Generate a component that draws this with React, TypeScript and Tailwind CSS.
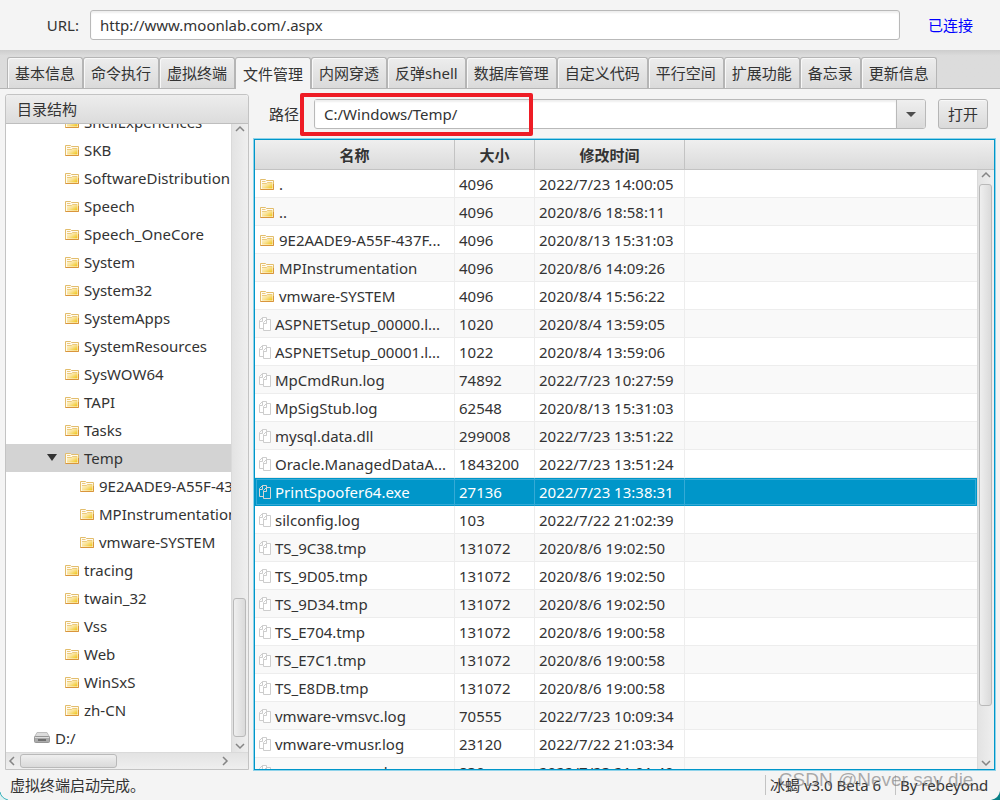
import { ReactNode } from "react";
import clsx from "clsx";

interface treeType {
    name: string;
    level: number;
    open?: boolean;
}

interface fileType {
    name: string;
    size: string;
    time: string;
    dir?: boolean;
}

const tabs = ["基本信息", "命令执行", "虚拟终端", "文件管理", "内网穿透", "反弹shell", "数据库管理", "自定义代码", "平行空间", "扩展功能", "备忘录", "更新信息"];

const tree: treeType[] = [
    { name: "ShellExperiences", level: 1 },
    { name: "SKB", level: 1 },
    { name: "SoftwareDistribution", level: 1 },
    { name: "Speech", level: 1 },
    { name: "Speech_OneCore", level: 1 },
    { name: "System", level: 1 },
    { name: "System32", level: 1 },
    { name: "SystemApps", level: 1 },
    { name: "SystemResources", level: 1 },
    { name: "SysWOW64", level: 1 },
    { name: "TAPI", level: 1 },
    { name: "Tasks", level: 1 },
    { name: "Temp", level: 1, open: true },
    { name: "9E2AADE9-A55F-437F", level: 2 },
    { name: "MPInstrumentation", level: 2 },
    { name: "vmware-SYSTEM", level: 2 },
    { name: "tracing", level: 1 },
    { name: "twain_32", level: 1 },
    { name: "Vss", level: 1 },
    { name: "Web", level: 1 },
    { name: "WinSxS", level: 1 },
    { name: "zh-CN", level: 1 },
    { name: "D:/", level: 0 },
];

const files: fileType[] = [
    { name: ".", size: "4096", time: "2022/7/23 14:00:05", dir: true },
    { name: "..", size: "4096", time: "2020/8/6 18:58:11", dir: true },
    { name: "9E2AADE9-A55F-437F...", size: "4096", time: "2020/8/13 15:31:03", dir: true },
    { name: "MPInstrumentation", size: "4096", time: "2020/8/6 14:09:26", dir: true },
    { name: "vmware-SYSTEM", size: "4096", time: "2020/8/4 15:56:22", dir: true },
    { name: "ASPNETSetup_00000.l...", size: "1020", time: "2020/8/4 13:59:05" },
    { name: "ASPNETSetup_00001.l...", size: "1022", time: "2020/8/4 13:59:06" },
    { name: "MpCmdRun.log", size: "74892", time: "2022/7/23 10:27:59" },
    { name: "MpSigStub.log", size: "62548", time: "2020/8/13 15:31:03" },
    { name: "mysql.data.dll", size: "299008", time: "2022/7/23 13:51:22" },
    { name: "Oracle.ManagedDataA...", size: "1843200", time: "2022/7/23 13:51:24" },
    { name: "PrintSpoofer64.exe", size: "27136", time: "2022/7/23 13:38:31" },
    { name: "silconfig.log", size: "103", time: "2022/7/22 21:02:39" },
    { name: "TS_9C38.tmp", size: "131072", time: "2020/8/6 19:02:50" },
    { name: "TS_9D05.tmp", size: "131072", time: "2020/8/6 19:02:50" },
    { name: "TS_9D34.tmp", size: "131072", time: "2020/8/6 19:02:50" },
    { name: "TS_E704.tmp", size: "131072", time: "2020/8/6 19:00:58" },
    { name: "TS_E7C1.tmp", size: "131072", time: "2020/8/6 19:00:58" },
    { name: "TS_E8DB.tmp", size: "131072", time: "2020/8/6 19:00:58" },
    { name: "vmware-vmsvc.log", size: "70555", time: "2022/7/23 10:09:34" },
    { name: "vmware-vmusr.log", size: "23120", time: "2022/7/22 21:03:34" },
    { name: "vmware-vmvss.log", size: "830", time: "2022/7/23 21:01:49" },
];

const FolderIcon = () => (
    <svg width="14" height="12" viewBox="0 0 14 12" className="shrink-0">
        <defs>
            <linearGradient id="folder" x1="0" y1="0" x2="1" y2="1">
                <stop offset="0" stopColor="#fff8e0" />
                <stop offset="0.5" stopColor="#f9e296" />
                <stop offset="1" stopColor="#efc20c" />
            </linearGradient>
        </defs>
        <path d="M0.5 11.5V1.5H5.5L6.5 2.5H13.5V11.5Z" fill="#fffaf0" stroke="#e2bd6c" />
        <path d="M2 10.5V5H6.5L7.5 4H12.5V10.5Z" fill="url(#folder)" />
        <path d="M2 3.5H5.5M2 5.5H6.5L7.5 4.5H12" fill="none" stroke="#ecca7c" />
        <path d="M0.5 11.5H13.5V6" fill="none" stroke="#d9953c" />
    </svg>
);

const FileIcon = ({ selected }: { selected: boolean }) => (
    <svg width="12" height="15" viewBox="0 0 12 15" className="shrink-0" fill={selected ? "#0096c9" : "#fff"} stroke={selected ? "#d5d5d5" : "#cdcdcd"}>
        <path d="M3.5 1.5H7.5V12.5H0.5V4.5Z M0.5 5.5H3.5V1.5" />
        <path d="M7.5 3.5H11.5V14.5H4.5V6.5Z M4.5 7.5H7.5V3.5" />
    </svg>
);

const DriveIcon = () => (
    <svg width="16" height="12" viewBox="0 0 16 12" className="shrink-0">
        <path d="M3 0.5H13L15.5 5H0.5Z" fill="#dcdcdc" stroke="#bdbdbd" />
        <rect x="0.5" y="4.5" width="15" height="6" rx="1" fill="#ababab" stroke="#969696" />
        <path d="M1 5.5H15" stroke="#dedede" />
        <rect x="4" y="7" width="8" height="2" fill="#6f6f6f" />
    </svg>
);

const Chevron = ({ d }: { d: string }) => (
    <svg width="10" height="10" viewBox="0 0 10 10" className="shrink-0" fill="none" stroke="#858585" strokeWidth="1.5">
        <path d={d} />
    </svg>
);

const VerticalBar = ({ children }: { children: ReactNode }) => (
    <div className="flex w-[17px] shrink-0 flex-col items-center border-l border-[#dadada] bg-linear-to-r from-[#e3e3e3] to-[#efefef] pr-px pb-px">
        <Chevron d="M1 7L5 3L9 7" />
        <div className="flex min-h-0 w-full flex-1 flex-col px-px py-1">{children}</div>
        <Chevron d="M1 3L5 7L9 3" />
    </div>
);

const App = () => {
    return (
        <div className="relative flex h-screen flex-col overflow-hidden bg-[#f4f4f4] font-['Noto_Sans','Noto_Sans_CJK_SC',sans-serif] text-[15px] leading-5 text-[#333]">
            <div className="flex h-[50px] shrink-0 items-center">
                <label htmlFor="url" className="w-[90px] pr-[11px] text-right">URL:</label>
                <input id="url" defaultValue="http://www.moonlab.com/.aspx" className="h-[30px] min-w-0 flex-1 rounded-[3px] border border-[#b9b9b9] bg-white px-[9px] shadow-[inset_0_2px_2px_#efefef] outline-none" />
                <div className="w-[100px] pl-7 text-[#0000ff]">已连接</div>
            </div>

            <div className="flex h-[39px] shrink-0 items-end border-b border-[#b5b5b5] bg-linear-to-b from-[#cdcdcd] to-[#dcdcdc] to-15% pl-[7px]">
                {
                    tabs.map((tab: string) => (
                        <button
                            key={tab}
                            className={clsx(
                                "shrink-0 rounded-t-[3px] border border-b-0 border-[#b5b5b5] px-[7px] whitespace-nowrap",
                                tab === "文件管理" ? "-mb-px h-8 bg-[#f4f4f4]" : "h-[31px] bg-linear-to-b from-[#ededed] to-[#dadada] shadow-[inset_1px_1px_0_#f8f8f8]"
                            )}
                        >
                            {tab}
                        </button>
                    ))
                }
            </div>

            <div className="flex min-h-0 flex-1 gap-1 px-[5px]">
                <div className="mt-[5px] flex w-[244px] shrink-0 flex-col rounded-t-[3px] border border-[#c3c3c3] bg-white">
                    <div className="flex h-[29px] shrink-0 items-center rounded-t-[3px] border-b border-[#bebebe] bg-linear-to-b from-[#ededed] to-[#dcdcdc] pl-[11px]">目录结构</div>
                    <div className="flex min-h-0 flex-1">
                        <div className="flex min-w-0 flex-1 flex-col justify-end overflow-hidden">
                            {
                                tree.map((node: treeType) => (
                                    <div
                                        key={node.name}
                                        className={clsx(
                                            "flex h-7 shrink-0 items-center gap-[5px] whitespace-nowrap",
                                            node.level === 0 && "pl-7",
                                            node.level === 1 && !node.open && "pl-[59px]",
                                            node.level === 2 && "pl-[74px]",
                                            node.open && "bg-[#d3d3d3] pl-[41px]"
                                        )}
                                    >
                                        {node.open && (
                                            <svg width="13" height="8" viewBox="0 0 13 8" className="shrink-0"><path d="M0 0H10L5 7Z" fill="#333" /></svg>
                                        )}
                                        {node.level === 0 ? <DriveIcon /> : <FolderIcon />}
                                        <span>{node.name}</span>
                                    </div>
                                ))
                            }
                        </div>
                        <VerticalBar>
                            <div className="flex-[462]" />
                            <div className="flex-[138] rounded-[3px] border border-[#b9b9b9] bg-linear-to-r from-[#efefef] to-[#dadada]" />
                        </VerticalBar>
                    </div>
                    <div className="flex h-[17px] shrink-0 items-center border-t border-[#dadada] bg-linear-to-b from-[#e3e3e3] to-[#efefef] pr-[18px] pl-px">
                        <Chevron d="M7 1L3 5L7 9" />
                        <div className="flex h-3.5 flex-1 px-[3px]">
                            <div className="w-[97px] rounded-[3px] border border-[#b9b9b9] bg-linear-to-b from-[#efefef] to-[#dadada]" />
                        </div>
                        <Chevron d="M3 1L7 5L3 9" />
                    </div>
                </div>

                <div className="flex min-w-0 flex-1 flex-col">
                    <div className="flex h-[50px] shrink-0 items-center pr-[7px] pl-4">
                        <label htmlFor="path" className="w-[45px] shrink-0">路径:</label>
                        <div className="relative flex h-[30px] min-w-0 flex-1 rounded-[3px] border border-[#b9b9b9] bg-white">
                            <input id="path" defaultValue="C:/Windows/Temp/" className="min-w-0 flex-1 bg-transparent px-[9px] shadow-[inset_0_2px_2px_#efefef] outline-none" />
                            <button aria-label="历史路径" className="flex w-[29px] items-center justify-center rounded-r-[2px] border-l border-[#b9b9b9] bg-linear-to-b from-[#efefef] to-[#dadada]">
                                <svg width="10" height="5" viewBox="0 0 10 5"><path d="M0 0H10L5 5Z" fill="#4d4d4d" /></svg>
                            </button>
                            <div className="pointer-events-none absolute -top-[7px] -left-[15px] h-[43px] w-[233px] rounded-[2px] border-4 border-[#ee1c25]" />
                        </div>
                        <button className="ml-3 h-[30px] w-[50px] shrink-0 rounded-[3px] border border-[#b5b5b5] bg-linear-to-b from-[#efefef] to-[#dadada] shadow-[inset_0_1px_0_#f8f8f8]">打开</button>
                    </div>

                    <div className="ml-px flex min-h-0 flex-1 flex-col border border-[#0096c9] bg-white shadow-[0_0_0_1px_#8fd3ea]">
                        <div className="flex min-h-0 flex-1 overflow-hidden">
                            <div className="min-w-0 flex-1 overflow-hidden">
                                <table className="w-full table-fixed border-separate border-spacing-0">
                                    <colgroup>
                                        <col className="w-[200px]" />
                                        <col className="w-20" />
                                        <col className="w-[150px]" />
                                        <col />
                                    </colgroup>
                                    <thead>
                                        <tr className="h-[30px] bg-linear-to-b from-[#efefef] to-[#dadada]">
                                            <th className="border-r border-b border-[#c3c3c3] p-0 font-bold">名称</th>
                                            <th className="border-r border-b border-[#c3c3c3] p-0 font-bold">大小</th>
                                            <th className="border-r border-b border-[#c3c3c3] p-0 font-bold">修改时间</th>
                                            <th className="border-b border-[#c3c3c3] p-0" />
                                        </tr>
                                    </thead>
                                    <tbody>
                                        {
                                            files.map((file: fileType) => {
                                                const selected = file.name === "PrintSpoofer64.exe";
                                                const cell = clsx("border-r border-b p-0 pl-1 whitespace-nowrap", selected ? "border-[#0096c9] border-r-[#35aad6]" : "border-[#ededed]");
                                                return (
                                                    <tr key={file.name} className={clsx("h-7", selected ? "bg-[#0096c9] text-white outline outline-offset-[-2px] outline-[#35aad6]" : "even:bg-[#f9f9f9]")}>
                                                        <td className={cell}>
                                                            <div className={clsx("flex items-center", file.dir ? "gap-[5px] pl-px" : "gap-1")}>
                                                                {file.dir ? <FolderIcon /> : <FileIcon selected={selected} />}
                                                                <span>{file.name}</span>
                                                            </div>
                                                        </td>
                                                        <td className={cell}>{file.size}</td>
                                                        <td className={cell}>{file.time}</td>
                                                        <td className={clsx("border-b p-0", selected ? "border-[#0096c9]" : "border-[#ededed]")} />
                                                    </tr>
                                                );
                                            })
                                        }
                                    </tbody>
                                </table>
                            </div>
                            <div className="flex w-[17px] shrink-0 flex-col">
                                <div className="h-[30px] shrink-0 border-b border-[#c3c3c3] bg-linear-to-b from-[#efefef] to-[#dadada]" />
                                <div className="flex min-h-0 flex-1">
                                    <VerticalBar>
                                        <div className="flex-[522] rounded-[3px] border border-[#b9b9b9] bg-linear-to-r from-[#efefef] to-[#dadada]" />
                                        <div className="flex-[48]" />
                                    </VerticalBar>
                                </div>
                            </div>
                        </div>
                    </div>
                </div>
            </div>

            <div className="flex h-[30px] shrink-0 items-center px-[10px]">
                <div className="flex-1">虚拟终端启动完成。</div>
                <div className="w-[130px] border-l border-[#c3c3c3] pl-1 whitespace-nowrap">冰蝎 v3.0 Beta 6</div>
                <div className="w-[95px] border-l border-[#c3c3c3] pl-1 whitespace-nowrap">By rebeyond</div>
            </div>

            <div className="pointer-events-none absolute right-4 bottom-2 font-['Liberation_Sans',sans-serif] text-[19px] leading-6 text-[#777]/60">CSDN @Never say die_</div>

            {/* rounded window corners */}
            <svg width="9" height="9" viewBox="0 0 9 9" className="absolute bottom-0 left-0">
                <path d="M0 0Q1 7 9 9H0Z" fill="#dff1f1" />
                <path d="M0 1Q1 7 8 9" fill="none" stroke="#3db3bd" />
            </svg>
            <svg width="9" height="9" viewBox="0 0 9 9" className="absolute right-0 bottom-0">
                <path d="M9 0Q8 7 0 9H9Z" fill="#087f86" />
            </svg>
        </div>
    );
};

export default App;
